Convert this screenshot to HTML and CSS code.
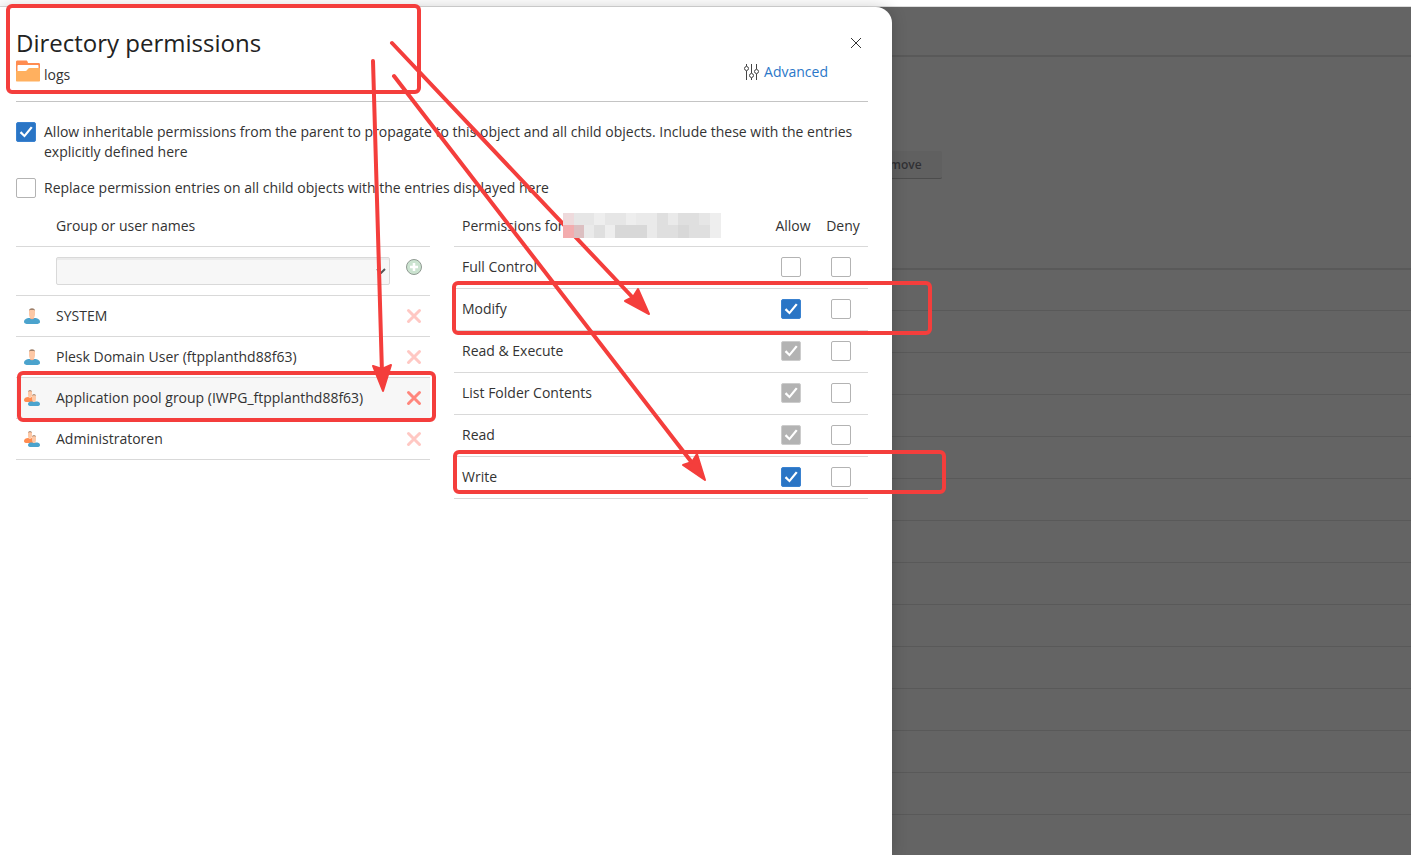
FILE: index.html
```html
<!DOCTYPE html>
<html lang="en">
<head>
    <meta charset="UTF-8">
    <meta name="viewport" content="width=device-width, initial-scale=1.0">
    <title>Directory permissions</title>
    <link rel="stylesheet" href="styles.css">
</head>
<body>
    <!-- shared icons -->
    <svg class="sprite" aria-hidden="true">
        <symbol id="user" viewBox="0 0 16 16">
            <path d="M0 14c0-3 3-4 5-4h6c2 0 5 1 5 4 0 1.500-2 2-4 2H4c-2 0-4-.5-4-2z" fill="#4ba3cd"/>
            <path d="M6 7h4v3.500c-1 1-3 1-4 0z" fill="#f7b493"/>
            <path d="M5 2h6v4c0 1.500-.5 3-1.200 4H6.200C5.500 9 5 7.500 5 6z" fill="#fdc8a6"/>
            <path d="M5 3c0-2 1-2.800 3-2.800S11 1 11 3l-.6-1H5.600z" fill="#a0806a"/>
        </symbol>
        <symbol id="group" viewBox="0 0 16 16">
            <path d="M0 10c0-2 2-3 4-3h4c2 0 3 1 3 2v3H3c-2 0-3-.5-3-2z" fill="#ff8c50"/>
            <path d="M4 1h4v3.500c0 1.500-.5 2.500-1 3.500H5c-.5-1-1-2-1-3.500z" fill="#fdc8a6"/>
            <path d="M4 2C4 .7 4.700.2 6 .2S8 .7 8 2l-.6-.8H4.600z" fill="#a0806a"/>
            <path d="M4 14c0-2 2-2.500 4-2.500h4c2 0 4 .5 4 2.500 0 1.500-1 2-3 2H7c-2 0-3-.5-3-2z" fill="#4ba3cd"/>
            <path d="M8 5h4v3.500c0 1.500-.5 2.500-1 3.500H9c-.5-1-1-2-1-3.500z" fill="#fdc8a6"/>
            <path d="M8 6c0-1.300.7-1.800 2-1.800s2 .5 2 1.800l-.6-.8H8.600z" fill="#a0806a"/>
        </symbol>
        <symbol id="cross" viewBox="0 0 16 16">
            <path d="M2.500 2.500l11 11M13.500 2.500l-11 11" stroke="#ff867c" stroke-width="3" stroke-linecap="round"/>
        </symbol>
    </svg>

    <div class="topbar"></div>
    <div class="layout">
        <div class="page">
            <div class="page-head"></div>
            <div class="page-tools"><button type="button" class="page-button">Remove</button></div>
            <div class="page-row first"></div>
            <div class="page-row"></div>
            <div class="page-row"></div>
            <div class="page-row"></div>
            <div class="page-row"></div>
            <div class="page-row"></div>
            <div class="page-row"></div>
            <div class="page-row"></div>
            <div class="page-row"></div>
            <div class="page-row"></div>
            <div class="page-row"></div>
            <div class="page-row"></div>
            <div class="page-row"></div>
        </div>

        <main class="drawer">
            <header class="drawer-head">
                <div class="drawer-title">
                    <h1>Directory permissions</h1>
                    <div class="path">
                        <svg width="24" height="24" viewBox="0 0 24 24" aria-hidden="true">
                            <path d="M0 3c0-1 .6-1.500 1.500-1.500H10c1 0 1.500.5 2 2.500h10.500c1 0 1.500.5 1.500 1.500V13H0z" fill="#ff8c50"/>
                            <path d="M1.500 7c0-.6.400-1 1-1h19c.6 0 1 .4 1 1v5h-21z" fill="#fff"/>
                            <path d="M0 12h9.500c2 0 2-3 4-3H24v12.500c0 .6-.4 1-1 1H1c-.6 0-1-.4-1-1z" fill="#ffb05f"/>
                        </svg>
                        <span>logs</span>
                    </div>
                </div>
                <a href="#" class="advanced">
                    <svg width="16" height="16" viewBox="0 0 16 16" fill="none" stroke="#444" aria-hidden="true">
                        <path d="M2.500 0v2M2.500 7v9M7.500 0v9M7.500 14v2M12.500 0v5M12.500 10v6"/>
                        <circle cx="2.500" cy="4.500" r="2"/>
                        <circle cx="7.500" cy="11.500" r="2"/>
                        <circle cx="12.500" cy="7.500" r="2"/>
                    </svg>
                    <span>Advanced</span>
                </a>
                <button type="button" class="close" aria-label="Close">
                    <svg width="12" height="12" viewBox="0 0 12 12" stroke="#333" aria-hidden="true"><path d="M1 1l10 10M11 1L1 11"/></svg>
                </button>
            </header>

            <form>
                <div class="option">
                    <input type="checkbox" id="inherit" checked>
                    <label for="inherit">Allow inheritable permissions from the parent to propagate to this object and all child objects. Include these with the entries explicitly defined here</label>
                </div>
                <div class="option">
                    <input type="checkbox" id="replace">
                    <label for="replace">Replace permission entries on all child objects with the entries displayed here</label>
                </div>

                <div class="columns">
                    <table class="users">
                        <thead>
                            <tr><th class="icon"></th><th>Group or user names</th><th class="icon"></th></tr>
                        </thead>
                        <tbody>
                            <tr class="add">
                                <td></td>
                                <td>
                                    <div class="select">
                                        <select aria-label="Group or user name"><option></option></select>
                                        <svg width="10" height="6" viewBox="0 0 10 6" fill="none" stroke="#555" stroke-width="2" aria-hidden="true"><path d="M1 1l4 4 4-4"/></svg>
                                    </div>
                                </td>
                                <td>
                                    <button type="button" class="icon-button" aria-label="Add">
                                        <svg width="16" height="16" viewBox="0 0 16 16" aria-hidden="true">
                                            <circle cx="8" cy="8" r="7.500" fill="#cbe3d0" stroke="#909a92"/>
                                            <path d="M8 4v8M4 8h8" stroke="#fff" stroke-width="2.500"/>
                                        </svg>
                                    </button>
                                </td>
                            </tr>
                            <tr>
                                <td><svg width="16" height="16" aria-hidden="true"><use href="#user"/></svg></td>
                                <td>SYSTEM</td>
                                <td><button type="button" class="icon-button faded" aria-label="Remove SYSTEM"><svg width="16" height="16"><use href="#cross"/></svg></button></td>
                            </tr>
                            <tr>
                                <td><svg width="16" height="16" aria-hidden="true"><use href="#user"/></svg></td>
                                <td>Plesk Domain User (ftpplanthd88f63)</td>
                                <td><button type="button" class="icon-button faded" aria-label="Remove Plesk Domain User"><svg width="16" height="16"><use href="#cross"/></svg></button></td>
                            </tr>
                            <tr class="selected">
                                <td><svg width="16" height="16" aria-hidden="true"><use href="#group"/></svg></td>
                                <td>Application pool group (IWPG_ftpplanthd88f63)</td>
                                <td><button type="button" class="icon-button" aria-label="Remove Application pool group"><svg width="16" height="16"><use href="#cross"/></svg></button></td>
                            </tr>
                            <tr>
                                <td><svg width="16" height="16" aria-hidden="true"><use href="#group"/></svg></td>
                                <td>Administratoren</td>
                                <td><button type="button" class="icon-button faded" aria-label="Remove Administratoren"><svg width="16" height="16"><use href="#cross"/></svg></button></td>
                            </tr>
                        </tbody>
                    </table>

                    <table class="permissions">
                        <thead>
                            <tr><th>Permissions for</th><th class="check">Allow</th><th class="check">Deny</th></tr>
                        </thead>
                        <tbody>
                            <tr>
                                <td>Full Control</td>
                                <td><input type="checkbox" aria-label="Allow Full Control"></td>
                                <td><input type="checkbox" aria-label="Deny Full Control"></td>
                            </tr>
                            <tr>
                                <td>Modify</td>
                                <td><input type="checkbox" aria-label="Allow Modify" checked></td>
                                <td><input type="checkbox" aria-label="Deny Modify"></td>
                            </tr>
                            <tr>
                                <td>Read &amp; Execute</td>
                                <td><input type="checkbox" aria-label="Allow Read &amp; Execute" checked disabled></td>
                                <td><input type="checkbox" aria-label="Deny Read &amp; Execute"></td>
                            </tr>
                            <tr>
                                <td>List Folder Contents</td>
                                <td><input type="checkbox" aria-label="Allow List Folder Contents" checked disabled></td>
                                <td><input type="checkbox" aria-label="Deny List Folder Contents"></td>
                            </tr>
                            <tr>
                                <td>Read</td>
                                <td><input type="checkbox" aria-label="Allow Read" checked disabled></td>
                                <td><input type="checkbox" aria-label="Deny Read"></td>
                            </tr>
                            <tr>
                                <td>Write</td>
                                <td><input type="checkbox" aria-label="Allow Write" checked></td>
                                <td><input type="checkbox" aria-label="Deny Write"></td>
                            </tr>
                        </tbody>
                    </table>
                </div>
            </form>
        </main>
    </div>

    <!-- red marks drawn over the page -->
    <svg class="marks" width="960" height="520" viewBox="0 0 960 520" aria-hidden="true">
        <g fill="none" stroke="#f43e3c" stroke-width="4" stroke-linecap="round">
            <rect x="8" y="6" width="411" height="86" rx="4"/>
            <rect x="19" y="373" width="415" height="47" rx="4"/>
            <rect x="454" y="283" width="476" height="50" rx="4"/>
            <rect x="455" y="452" width="489" height="40" rx="4"/>
            <path d="M373 61l9 312M392 43l244 258M394 76l299 388"/>
        </g>
        <g fill="#f43e3c" stroke="#f43e3c" stroke-width="2" stroke-linejoin="round">
            <path d="M373 366l9 3 9-4-8 26z"/>
            <path d="M625 301l8-4 5-8 11 25z"/>
            <path d="M683 465l9-3 5-8 8 26z"/>
        </g>
        <!-- blurred-out account name -->
        <g shape-rendering="crispEdges">
            <path fill="#e6e6e6" d="M563 213h158v25H563z"/>
            <path fill="#eedadc" d="M563 213h11v12h-11z"/>
            <path fill="#f3acae" d="M563 225h11v13h-11z"/>
            <path fill="#dcbfc1" d="M574 225h10v13h-10z"/>
            <path fill="#eee" d="M594 213h11v12h-11zM626 213h10v12h-10zM710 213h11v12h-11zM710 225h11v13h-11zM605 225h10v13h-10z"/>
            <path fill="#dfdfdf" d="M657 213h11v12h-11zM678 213h21v12h-21zM594 225h11v13h-11zM657 225h21v13h-21zM689 225h21v13h-21z"/>
            <path fill="#d8d8d8" d="M615 225h32v13h-32zM678 225h11v13h-11z"/>
            <path fill="#eaeaea" d="M584 225h10v13h-10zM636 213h21v12h-21zM668 213h10v12h-10zM647 225h10v13h-10z"/>
        </g>
    </svg>
</body>
</html>
```

FILE: styles.css
```css
* {
    box-sizing: border-box;
    margin: 0;
    padding: 0;
}

body {
    display: flex;
    flex-direction: column;
    min-height: 100vh;
    position: relative;
    background: #fff;
    color: #333;
    font-family: "Open Sans", sans-serif;
    font-size: 14px;
    line-height: 20px;
}

button, select {
    font: inherit;
    color: inherit;
    border: none;
    background: none;
}

svg {
    display: block;
}

.sprite {
    position: absolute;
    width: 0;
    height: 0;
}

.topbar {
    height: 7px;
    border-bottom: 1px solid #ddd;
}

/* the drawer and the page behind it share one grid cell */
.layout {
    flex: 1;
    display: grid;
    grid-template-columns: 100%;
}

.page, .drawer {
    grid-area: 1 / 1;
}

.page {
    background: #646464;
}

.page-head {
    height: 50px;
    border-bottom: 2px solid #595959;
}

.page-tools {
    height: 213px;
    padding: 94px 0 0 855px;
    border-bottom: 2px solid #595959;
}

.page-button {
    height: 28px;
    padding: 0 20px;
    background: #606060;
    border-bottom: 1px solid #4c4c4c;
    border-radius: 2px;
    color: #303034;
    font-size: 12px;
    font-weight: 600;
}

.page-row {
    height: 42px;
    border-bottom: 1px solid #595959;
}

.page-row.first {
    height: 41px;
}

.drawer {
    width: 100%;
    max-width: 892px;
    padding: 0 24px 24px 16px;
    background: #fff;
    border-radius: 0 16px 0 0;
    box-shadow: 0 0 16px rgba(0, 0, 0, 0.2);
}

.drawer-head {
    display: flex;
    align-items: flex-end;
    gap: 16px;
    padding: 20px 0 16px;
    border-bottom: 1px solid #c4c4c4;
    margin-bottom: 20px;
}

.drawer-title {
    flex: 1;
}

h1 {
    color: #222;
    font-size: 24px;
    font-weight: 400;
    line-height: 32px;
}

.path {
    display: flex;
    gap: 4px;
    height: 26px;
}

.path span {
    align-self: flex-end;
}

.advanced {
    display: flex;
    align-items: center;
    gap: 4px;
    margin-bottom: 3px;
    color: #2b77c8;
    text-decoration: none;
}

.close {
    align-self: flex-start;
    display: grid;
    place-items: center;
    width: 24px;
    height: 24px;
    margin-top: 4px;
    cursor: pointer;
}

input[type="checkbox"] {
    appearance: none;
    display: block;
    flex: none;
    width: 20px;
    height: 20px;
    border: 1px solid #b3b3b3;
    border-radius: 2px;
    background: #fff;
}

input[type="checkbox"]:checked {
    background: #2a75c5;
    border-color: #3a82d0;
}

input[type="checkbox"]:checked:disabled {
    background: #b3b3b3;
    border-color: #ccc;
}

input[type="checkbox"]:checked::before {
    content: "";
    display: block;
    height: 18px;
    background: #fff;
    clip-path: polygon(15% 55%, 24% 46%, 41% 64%, 77% 19%, 87% 26%, 42% 81%);
}

.option {
    display: flex;
    gap: 8px;
    margin-bottom: 16px;
}

.columns {
    display: grid;
    grid-template-columns: 1fr 1fr;
    align-items: start;
    gap: 24px;
    margin-top: -8px;
}

table {
    width: 100%;
    border-spacing: 0;
}

th, td {
    padding: 10px 8px;
    border-bottom: 1px solid #d9d9d9;
    font-weight: 400;
    text-align: left;
}

.users .icon {
    width: 32px;
}

.users .add td {
    vertical-align: top;
}

.users .add .icon-button {
    margin-top: 2px;
}

.selected td {
    background: #f7f7f7;
}

.select {
    position: relative;
}

.select select {
    appearance: none;
    display: block;
    width: 100%;
    height: 28px;
    padding: 0 24px 0 8px;
    background: #f7f7f7;
    border: 1px solid #d9d9d9;
    border-radius: 2px;
    box-shadow: inset 0 2px 0 #ebebeb;
}

.select svg {
    position: absolute;
    top: 11px;
    right: 4px;
}

.icon-button {
    display: block;
    width: 16px;
    height: 16px;
    cursor: pointer;
}

.faded {
    opacity: 0.45;
}

.permissions .check {
    width: 50px;
    padding: 10px 0;
    text-align: center;
}

.permissions td {
    padding: 10px 8px 11px;
}

.permissions td + td {
    padding: 10px 0 11px 13px;
}

.marks {
    position: absolute;
    top: 0;
    left: 0;
    pointer-events: none;
}
```
